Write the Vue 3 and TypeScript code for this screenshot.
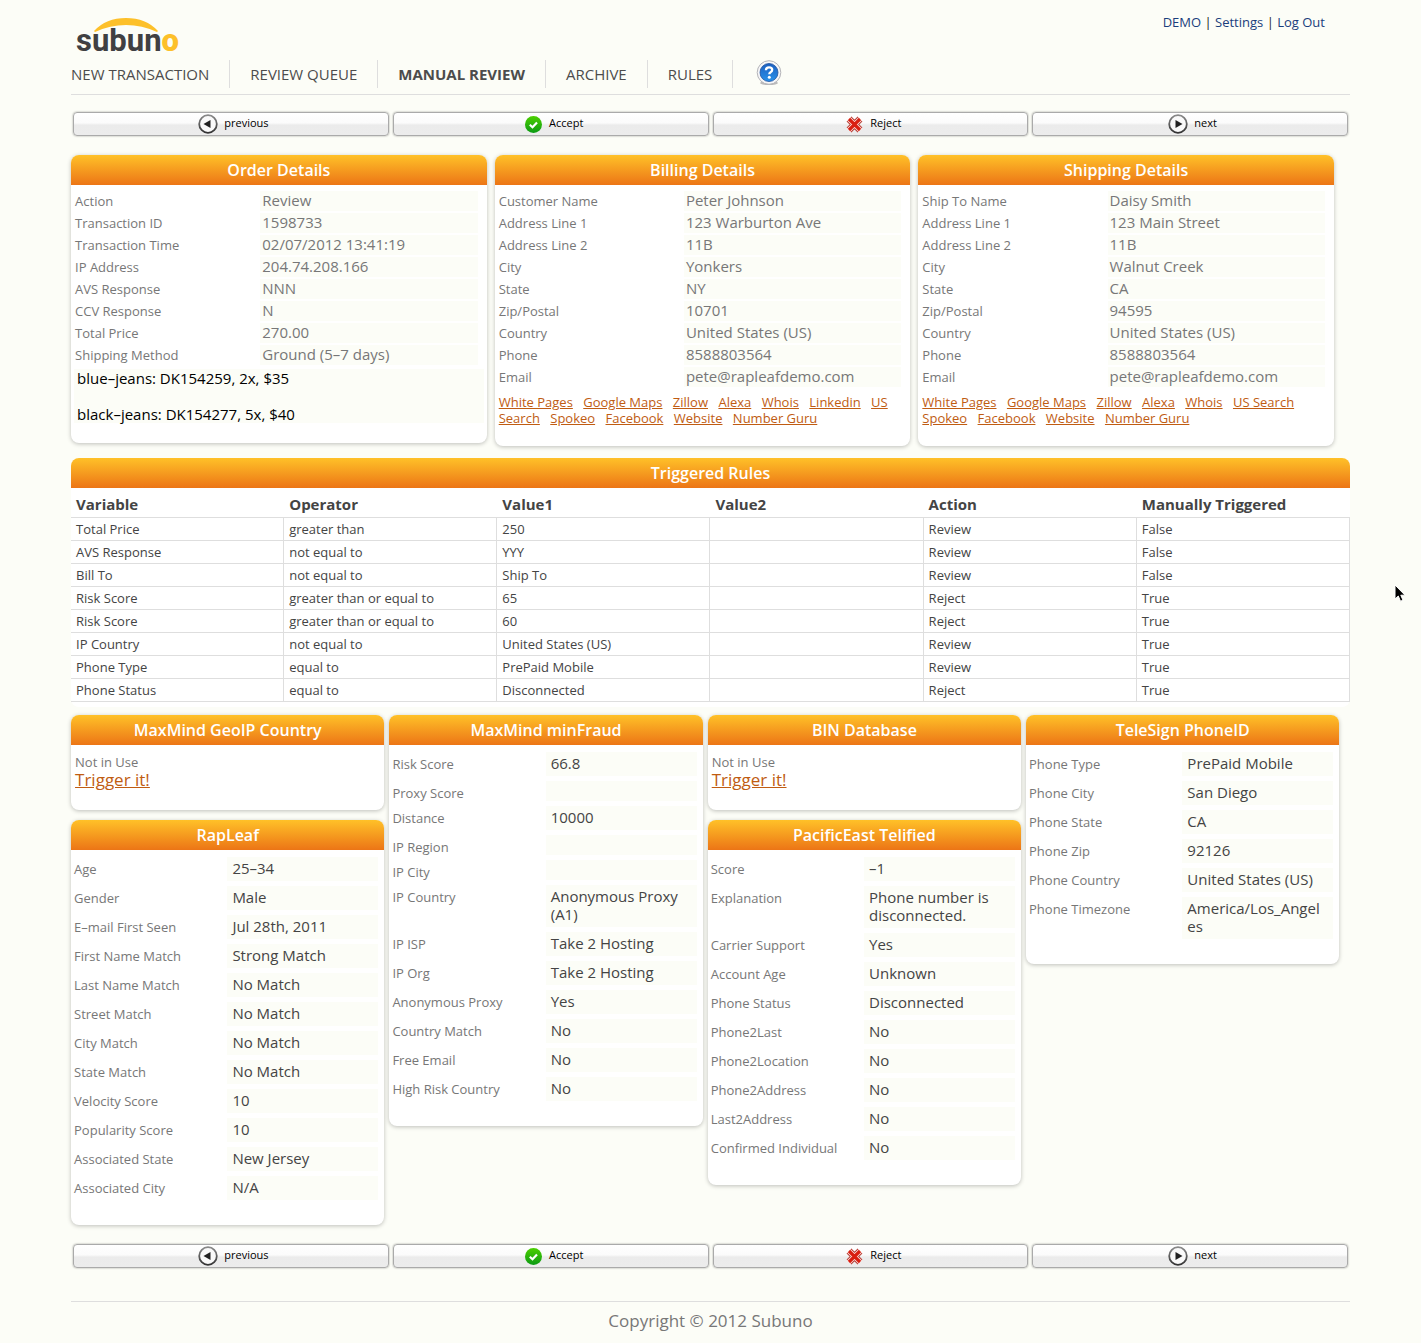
<script setup lang="ts">
interface Field {
  label: string
  value: string
}
interface Card {
  title: string
  fields?: Field[]
  links?: string[]
  items?: string[]
}

const toFields = (rows: [string, string][]): Field[] => rows.map(([label, value]) => ({ label, value }))

const navItems = ['NEW TRANSACTION', 'REVIEW QUEUE', 'MANUAL REVIEW', 'ARCHIVE', 'RULES']
const actions = ['previous', 'Accept', 'Reject', 'next']
const bars = ['top', 'bottom']

const details: Card[] = [
  {
    title: 'Order Details',
    fields: toFields([
      ['Action', 'Review'],
      ['Transaction ID', '1598733'],
      ['Transaction Time', '02/07/2012 13:41:19'],
      ['IP Address', '204.74.208.166'],
      ['AVS Response', 'NNN'],
      ['CCV Response', 'N'],
      ['Total Price', '270.00'],
      ['Shipping Method', 'Ground (5–7 days)'],
    ]),
    items: ['blue–jeans: DK154259, 2x, $35', 'black–jeans: DK154277, 5x, $40'],
  },
  {
    title: 'Billing Details',
    fields: toFields([
      ['Customer Name', 'Peter Johnson'],
      ['Address Line 1', '123 Warburton Ave'],
      ['Address Line 2', '11B'],
      ['City', 'Yonkers'],
      ['State', 'NY'],
      ['Zip/Postal', '10701'],
      ['Country', 'United States (US)'],
      ['Phone', '8588803564'],
      ['Email', 'pete@rapleafdemo.com'],
    ]),
    links: ['White Pages', 'Google Maps', 'Zillow', 'Alexa', 'Whois', 'Linkedin', 'US Search', 'Spokeo', 'Facebook', 'Website', 'Number Guru'],
  },
  {
    title: 'Shipping Details',
    fields: toFields([
      ['Ship To Name', 'Daisy Smith'],
      ['Address Line 1', '123 Main Street'],
      ['Address Line 2', '11B'],
      ['City', 'Walnut Creek'],
      ['State', 'CA'],
      ['Zip/Postal', '94595'],
      ['Country', 'United States (US)'],
      ['Phone', '8588803564'],
      ['Email', 'pete@rapleafdemo.com'],
    ]),
    links: ['White Pages', 'Google Maps', 'Zillow', 'Alexa', 'Whois', 'US Search', 'Spokeo', 'Facebook', 'Website', 'Number Guru'],
  },
]

const ruleHeads = ['Variable', 'Operator', 'Value1', 'Value2', 'Action', 'Manually Triggered']
const rules: string[][] = [
  ['Total Price', 'greater than', '250', '', 'Review', 'False'],
  ['AVS Response', 'not equal to', 'YYY', '', 'Review', 'False'],
  ['Bill To', 'not equal to', 'Ship To', '', 'Review', 'False'],
  ['Risk Score', 'greater than or equal to', '65', '', 'Reject', 'True'],
  ['Risk Score', 'greater than or equal to', '60', '', 'Reject', 'True'],
  ['IP Country', 'not equal to', 'United States (US)', '', 'Review', 'True'],
  ['Phone Type', 'equal to', 'PrePaid Mobile', '', 'Review', 'True'],
  ['Phone Status', 'equal to', 'Disconnected', '', 'Reject', 'True'],
]

const columns: Card[][] = [
  [
    { title: 'MaxMind GeoIP Country' },
    {
      title: 'RapLeaf',
      fields: toFields([
        ['Age', '25–34'],
        ['Gender', 'Male'],
        ['E–mail First Seen', 'Jul 28th, 2011'],
        ['First Name Match', 'Strong Match'],
        ['Last Name Match', 'No Match'],
        ['Street Match', 'No Match'],
        ['City Match', 'No Match'],
        ['State Match', 'No Match'],
        ['Velocity Score', '10'],
        ['Popularity Score', '10'],
        ['Associated State', 'New Jersey'],
        ['Associated City', 'N/A'],
      ]),
    },
  ],
  [
    {
      title: 'MaxMind minFraud',
      fields: toFields([
        ['Risk Score', '66.8'],
        ['Proxy Score', ''],
        ['Distance', '10000'],
        ['IP Region', ''],
        ['IP City', ''],
        ['IP Country', 'Anonymous Proxy (A1)'],
        ['IP ISP', 'Take 2 Hosting'],
        ['IP Org', 'Take 2 Hosting'],
        ['Anonymous Proxy', 'Yes'],
        ['Country Match', 'No'],
        ['Free Email', 'No'],
        ['High Risk Country', 'No'],
      ]),
    },
  ],
  [
    { title: 'BIN Database' },
    {
      title: 'PacificEast Telified',
      fields: toFields([
        ['Score', '–1'],
        ['Explanation', 'Phone number is disconnected.'],
        ['Carrier Support', 'Yes'],
        ['Account Age', 'Unknown'],
        ['Phone Status', 'Disconnected'],
        ['Phone2Last', 'No'],
        ['Phone2Location', 'No'],
        ['Phone2Address', 'No'],
        ['Last2Address', 'No'],
        ['Confirmed Individual', 'No'],
      ]),
    },
  ],
  [
    {
      title: 'TeleSign PhoneID',
      fields: toFields([
        ['Phone Type', 'PrePaid Mobile'],
        ['Phone City', 'San Diego'],
        ['Phone State', 'CA'],
        ['Phone Zip', '92126'],
        ['Phone Country', 'United States (US)'],
        ['Phone Timezone', 'America/Los_Angeles'],
      ]),
    },
  ],
]
</script>

<template>
  <div class="page">
    <svg width="0" height="0" class="defs" aria-hidden="true">
      <defs>
        <linearGradient id="ring" x1="0" y1="0" x2="0" y2="1">
          <stop offset="0" stop-color="#8a8a8a" />
          <stop offset="1" stop-color="#333" />
        </linearGradient>
        <linearGradient id="green" x1="0" y1="0" x2="0" y2="1">
          <stop offset="0" stop-color="#4cd000" />
          <stop offset="1" stop-color="#0b9a14" />
        </linearGradient>
        <linearGradient id="blue" x1="0" y1="0" x2="0" y2="1">
          <stop offset="0" stop-color="#1c5fc0" />
          <stop offset="1" stop-color="#2a92ea" />
        </linearGradient>
      </defs>
    </svg>

    <header>
      <div class="masthead">
        <a href="#" class="logo" aria-label="subuno">
          <svg class="arc" width="64" height="16" viewBox="0 0 64 16" aria-hidden="true">
            <path d="M0 14 Q12 1 32 1 Q52 1 64 14 L63 15 Q48 8 32 8 Q16 8 1 15 Z" fill="#fdc02a" />
          </svg>
          <span class="word">subun<b>o</b></span>
        </a>
        <div class="account">
          <a href="#">DEMO</a> | <a href="#">Settings</a> | <a href="#">Log Out</a>
        </div>
      </div>
      <nav>
        <a v-for="item in navItems" :key="item" href="#" :class="{ current: item === 'MANUAL REVIEW' }">{{ item }}</a>
        <a href="#" class="help" aria-label="Help">
          <svg width="26" height="26" viewBox="0 0 26 26">
            <ellipse cx="13" cy="23" rx="9" ry="2" fill="#bbb" />
            <circle cx="13" cy="12.5" r="11.8" fill="#f6f6f8" stroke="#b4b4b8" stroke-width="1" />
            <circle cx="13" cy="12.5" r="9" fill="url(#blue)" stroke="#1a4f9e" stroke-width=".8" />
            <path d="M9.900 10.200 Q10 7.400 13 7.400 Q16.200 7.400 16.200 9.800 Q16.200 11.300 14.600 12.200 Q13.300 13 13.300 14.300" fill="none" stroke="#fff" stroke-width="2.300" />
            <circle cx="13.300" cy="17.300" r="1.500" fill="#fff" />
          </svg>
        </a>
      </nav>
    </header>

    <main>
      <template v-for="bar in bars" :key="bar">
        <div class="actions" :class="bar">
          <button v-for="action in actions" :key="action" type="button">
            <svg width="20" height="20" viewBox="0 0 20 20" aria-hidden="true">
              <template v-if="action === 'previous' || action === 'next'">
                <circle cx="10" cy="10" r="8.800" fill="#fafafa" stroke="url(#ring)" stroke-width="1.800" />
                <path v-if="action === 'previous'" d="M5.500 10 L12.500 6 V14 Z" fill="#222" />
                <path v-else d="M14.500 10 L7.500 6 V14 Z" fill="#222" />
              </template>
              <template v-else-if="action === 'Accept'">
                <circle cx="10.500" cy="10.500" r="8.500" fill="url(#green)" />
                <path d="M6.800 10.800 L9.500 13.200 L14 8.500" fill="none" stroke="#fff" stroke-width="2.200" />
              </template>
              <template v-else>
                <path d="M5 5 L16 16 M16 5 L5 16" stroke="#b5342c" stroke-width="6.800" />
                <path d="M4.700 4.700 L16.300 16.300 M16.300 4.700 L4.700 16.300" stroke="#fbe3e0" stroke-width="5" />
                <path d="M5 5 L16 16 M16 5 L5 16" stroke="#d91e10" stroke-width="3.200" />
              </template>
            </svg>
            <span>{{ action }}</span>
          </button>
        </div>

        <template v-if="bar === 'top'">
          <section class="details">
            <article v-for="card in details" :key="card.title" class="card">
              <h2>{{ card.title }}</h2>
              <dl class="compact">
                <div v-for="field in card.fields" :key="field.label">
                  <dt>{{ field.label }}</dt>
                  <dd>{{ field.value }}</dd>
                </div>
              </dl>
              <div v-if="card.items" class="items">
                <p v-for="item in card.items" :key="item">{{ item }}</p>
              </div>
              <p v-if="card.links" class="lookups">
                <template v-for="link in card.links" :key="link"><a href="#">{{ link }}</a>{{ ' ' }}</template>
              </p>
            </article>
          </section>

          <section class="rules">
            <h2>Triggered Rules</h2>
            <table>
              <thead>
                <tr>
                  <th v-for="head in ruleHeads" :key="head" scope="col">{{ head }}</th>
                </tr>
              </thead>
              <tbody>
                <tr v-for="(rule, r) in rules" :key="r">
                  <td v-for="(cell, c) in rule" :key="c">{{ cell }}</td>
                </tr>
              </tbody>
            </table>
          </section>

          <section class="services">
            <div v-for="(column, i) in columns" :key="i" class="column">
              <article v-for="card in column" :key="card.title" class="card">
                <h2>{{ card.title }}</h2>
                <dl v-if="card.fields" class="roomy">
                  <div v-for="field in card.fields" :key="field.label">
                    <dt>{{ field.label }}</dt>
                    <dd>{{ field.value }}</dd>
                  </div>
                </dl>
                <div v-else class="unused">
                  <p>Not in Use</p>
                  <a href="#">Trigger it!</a>
                </div>
              </article>
            </div>
          </section>
        </template>
      </template>
    </main>

    <footer>Copyright © 2012 Subuno</footer>

    <svg class="pointer" width="14" height="20" viewBox="0 0 14 20" aria-hidden="true">
      <path d="M1 1 V15 L4.300 12 L6.500 17.200 L9 16.200 L6.800 11.200 H11 Z" fill="#000" stroke="#fff" stroke-width="1" />
    </svg>
  </div>
</template>

<style>
body {
  background: #fcfdf7;
}
</style>

<style scoped>
.page {
  position: relative;
  padding: 0 5%;
  font-family: 'Lucida Grande', 'Open Sans', 'Noto Sans', sans-serif;
  font-size: 13px;
  color: #444;
}
.defs {
  position: absolute;
}
h2,
p,
dl,
dd {
  margin: 0;
}
.masthead {
  display: flex;
  justify-content: space-between;
  height: 60px;
}
.logo {
  position: relative;
  padding: 19px 0 0 5px;
  text-decoration: none;
  color: #404042;
}
.arc {
  position: absolute;
  left: 23px;
  top: 17px;
}
.word {
  display: block;
  font-family: Roboto, sans-serif;
  font-size: 31px;
  line-height: 44px;
  font-weight: 700;
}
.word b {
  color: #fdc02a;
}
.account {
  padding: 12px 25px 0 0;
  line-height: 20px;
  color: #222;
}
.account a {
  color: #1a3d7c;
  text-decoration: none;
}
nav {
  display: flex;
  height: 34px;
  border-bottom: 1px solid #dedede;
}
nav a {
  height: 28px;
  padding: 0 20px;
  border-right: 1px solid #dedede;
  font-size: 15px;
  line-height: 29px;
  color: #4c4c4c;
  text-decoration: none;
}
nav a:first-child {
  padding-left: 0;
}
nav .current {
  font-weight: 700;
}
nav .help {
  padding: 0 23px;
  border: 0;
}
.actions {
  display: flex;
  gap: 4px;
  padding: 17px 2px 19px;
}
.actions.bottom {
  padding: 19px 2px 33px;
}
button {
  flex: 1;
  display: flex;
  align-items: center;
  justify-content: center;
  gap: 6px;
  height: 24px;
  padding: 0 0 0 5px;
  border: 1px solid #aaa;
  border-radius: 4px;
  box-shadow: 0 0 2px rgba(0, 0, 0, 0.4);
  background: linear-gradient(#fff 0%, #fbfbfb 45%, #ebebeb 55%, #ececec 100%);
  font-family: inherit;
  font-size: 11px;
  font-weight: 500;
  line-height: 20px;
  color: #000;
}
button span {
  padding-bottom: 2px;
}
.details {
  display: flex;
  align-items: flex-start;
  gap: 8px;
}
.details .card {
  width: 32.5%;
}
.card {
  border-radius: 8px;
  background: #fff;
  box-shadow: 0 1px 4px rgba(0, 0, 0, 0.25);
}
h2 {
  height: 30px;
  border-radius: 8px 8px 0 0;
  background: linear-gradient(#ffc128, #ec7516);
  font-size: 16px;
  line-height: 30px;
  font-weight: 600;
  text-align: center;
  color: #fff;
}
dl > div {
  display: flex;
  align-items: flex-start;
}
dt {
  flex: 1;
  line-height: 20px;
  color: #777;
}
dd {
  box-sizing: border-box;
  background: #fcfdf7;
  font-size: 15px;
  line-height: 18px;
  overflow-wrap: anywhere;
}
.compact {
  padding: 6px 9px 0 4px;
}
.compact > div {
  margin-bottom: 2px;
}
.compact dd {
  width: 54%;
  height: 20px;
  padding-left: 2px;
  color: #777;
}
.items {
  display: grid;
  gap: 18px;
  margin: 4px 3px 20px;
  background: #fcfdf7;
  color: #000;
}
.items p {
  padding-left: 3px;
  font-size: 15px;
  line-height: 18px;
}
.lookups {
  padding: 5px 4px 20px;
  line-height: 16px;
}
.lookups a {
  margin-right: 7px;
}
.lookups a,
.unused a {
  color: #c05c12;
  text-decoration: underline;
}
.rules {
  margin-top: 12px;
  padding-bottom: 5px;
  border-radius: 8px;
  background: #fff;
}
table {
  width: 100%;
  table-layout: fixed;
  border-collapse: separate;
  border-spacing: 0;
}
th,
td {
  padding: 0 5px;
  border-bottom: 1px solid #dedede;
  text-align: left;
}
th {
  padding: 4px 5px 1px;
  font-size: 15px;
  line-height: 24px;
  font-weight: 700;
}
td {
  border-right: 1px solid #dedede;
  line-height: 22px;
}
.services {
  display: flex;
  align-items: flex-start;
  gap: 5px;
  margin-top: 8px;
}
.column {
  width: 24.5%;
  display: grid;
  gap: 10px;
}
.roomy {
  padding: 7px 6px 20px 3px;
}
.roomy > div {
  margin-bottom: 5px;
}
.roomy dt {
  padding-top: 4px;
  line-height: 16px;
}
.roomy dd {
  width: 151px;
  min-height: 20px;
  padding: 2px 8px 4px 5px;
}
.roomy dd:empty {
  padding: 0;
}
.unused {
  padding: 8px 4px 21px;
  line-height: 18px;
  color: #777;
}
.unused a {
  display: block;
  width: fit-content;
  font-size: 17px;
}
footer {
  border-top: 1px solid #dedede;
  padding: 8px 0 12px;
  font-size: 17px;
  line-height: 21px;
  text-align: center;
  color: #777;
}
.pointer {
  position: absolute;
  top: 584px;
  right: 13px;
}
</style>
